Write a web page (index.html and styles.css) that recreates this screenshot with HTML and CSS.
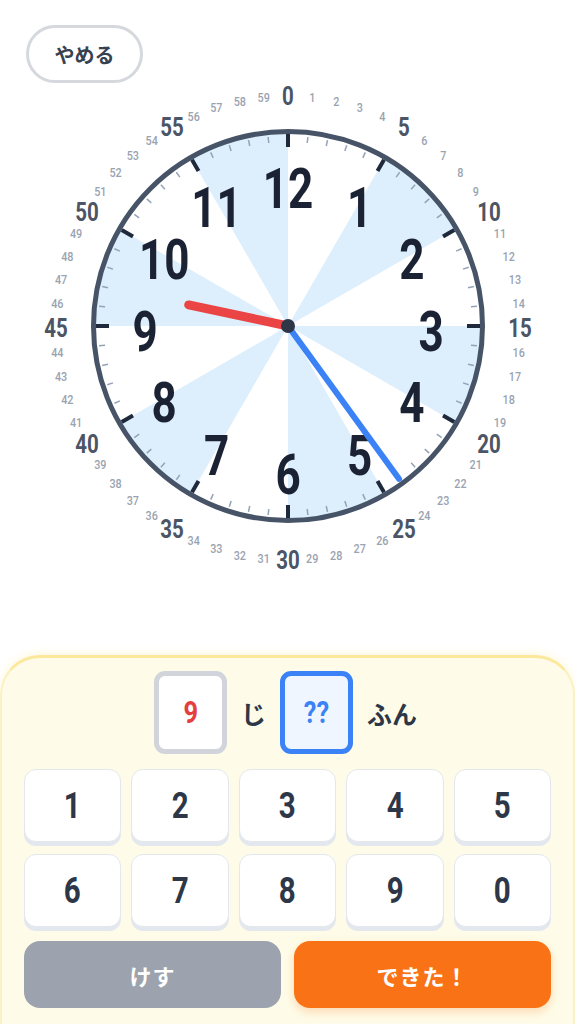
FILE: index.html
```html
<!DOCTYPE html>
<html lang="ja">
<head>
<meta charset="utf-8">
<title>とけい</title>
<link rel="stylesheet" href="styles.css">
</head>
<body>
<div class="app">
  <header class="top">
    <button class="quit">やめる</button>
  </header>
  <div class="clock-wrap">
    <svg id="clock" class="clock" width="500" height="490" viewBox="-250 -240 500 490">
      <circle r="194" class="face"/>
      <g id="sectors" class="sectors"></g>
      <circle r="194.5" class="rim"/>
      <g id="ticks"></g>
      <g id="hours" class="hours"></g>
      <g id="minutes" class="minutes"></g>
      <line class="hand-hour" x1="0" y1="0" x2="0" y2="-101.5" transform="rotate(282)"/>
      <line class="hand-min" x1="0" y1="0" x2="0" y2="-189" transform="rotate(144)"/>
      <circle r="7" class="pivot"/>
    </svg>
  </div>
  <section class="panel">
    <div class="answer">
      <div class="slot slot-hour"><span class="num">9</span></div>
      <span class="unit">じ</span>
      <div class="slot slot-min"><span class="num">??</span></div>
      <span class="unit">ふん</span>
    </div>
    <div class="keypad">
      <button class="key"><span class="num">1</span></button>
      <button class="key"><span class="num">2</span></button>
      <button class="key"><span class="num">3</span></button>
      <button class="key"><span class="num">4</span></button>
      <button class="key"><span class="num">5</span></button>
      <button class="key"><span class="num">6</span></button>
      <button class="key"><span class="num">7</span></button>
      <button class="key"><span class="num">8</span></button>
      <button class="key"><span class="num">9</span></button>
      <button class="key"><span class="num">0</span></button>
    </div>
    <div class="actions">
      <button class="act act-clear">けす</button>
      <button class="act act-done">できた！</button>
    </div>
  </section>
</div>
<script src="script.js"></script>
</body>
</html>
```
FILE: styles.css
```css
* { box-sizing: border-box; }
html, body { margin: 0; padding: 0; background: #ffffff; }
body {
  width: 575px;
  height: 1024px;
  overflow: hidden;
  font-family: "Noto Sans CJK JP", "Noto Sans", sans-serif;
}
.app { display: flex; flex-direction: column; height: 1024px; }

.top { display: flex; padding: 25px 0 0 26px; }
.quit {
  width: 117px;
  height: 58px;
  border: 3px solid #d5d8dd;
  border-radius: 29px;
  background: #ffffff;
  color: #374151;
  font-family: "Noto Sans CJK JP", sans-serif;
  font-weight: 700;
  font-size: 20px;
  padding: 0;
}

.clock-wrap { display: flex; justify-content: center; padding-top: 3px; }
.clock { overflow: visible; display: block; }
.face { fill: #ffffff; }
.sectors path { fill: #ddeffc; }
.rim { fill: none; stroke: #475467; stroke-width: 5; }
.tick-major { stroke: #1e293b; stroke-width: 4; }
.tick-minor { stroke: #94a3b8; stroke-width: 1.5; }
.clock text {
  font-family: "Roboto", "DejaVu Sans", sans-serif;
  text-anchor: middle;
  dominant-baseline: central;
}
.hours text { font-size: 55px; font-weight: 700; fill: #1a2233; }
.minutes .big { font-size: 25px; font-weight: 700; fill: #4b5565; }
.minutes .small { font-size: 12px; font-weight: 500; fill: #9aa3b0; }
.hand-hour { stroke: #ea4444; stroke-width: 9; stroke-linecap: round; }
.hand-min { stroke: #3b82f6; stroke-width: 6; stroke-linecap: round; }
.pivot { fill: #2d3748; }

.panel {
  margin-top: 79px;
  flex: 1;
  background: #fefce8;
  border-top: 3px solid #fce89a;
  border-left: 2px solid #fbf1c2;
  border-right: 2px solid #fbf1c2;
  border-radius: 40px 40px 0 0;
  padding: 13px 22px 0;
  box-shadow: 0 -2px 8px rgba(250, 214, 80, 0.18);
}
.num {
  display: inline-block;
  font-family: "Roboto", sans-serif;
  font-weight: 700;
  transform: scaleX(0.82);
}
.answer {
  display: flex;
  justify-content: center;
  align-items: center;
  gap: 14px;
  padding-right: 4px;
}
.slot {
  width: 73px;
  height: 83px;
  border-radius: 11px;
  border: 5px solid #d1d5db;
  background: #ffffff;
  display: flex;
  align-items: center;
  justify-content: center;
  font-size: 31px;
}
.slot-hour { color: #e53e3e; }
.slot-min { border-color: #3b82f6; background: #eff6ff; color: #3b82f6; }
.unit { font-size: 25px; font-weight: 700; color: #2d3748; }

.keypad {
  margin-top: 15px;
  display: grid;
  grid-template-columns: repeat(5, 1fr);
  gap: 12px 10px;
}
.key {
  height: 73px;
  background: #ffffff;
  border: 1.5px solid #e4e7ec;
  border-radius: 12px;
  box-shadow: 0 4px 0 #e3e8ef;
  color: #2d3748;
  font-size: 36px;
  padding: 0;
  display: flex;
  align-items: center;
  justify-content: center;
}

.actions {
  margin-top: 14px;
  display: grid;
  grid-template-columns: 1fr 1fr;
  gap: 13px;
}
.act {
  height: 67px;
  border: none;
  border-radius: 16px;
  color: #ffffff;
  font-family: "Noto Sans CJK JP", sans-serif;
  font-weight: 700;
  font-size: 22px;
  padding: 0;
  letter-spacing: 1px;
}
.act-clear { background: #9ca3ae; }
.act-done { background: #f97316; box-shadow: 0 4px 10px rgba(249, 115, 22, 0.25); }
```
FILE: script.js
```js
(function () {
  var NS = 'http://www.w3.org/2000/svg';
  function el(tag, attrs, parent, text) {
    var e = document.createElementNS(NS, tag);
    for (var k in attrs) e.setAttribute(k, attrs[k]);
    if (text !== undefined) e.textContent = text;
    parent.appendChild(e);
    return e;
  }
  function pt(r, deg) {
    var a = deg * Math.PI / 180;
    return [r * Math.sin(a), -r * Math.cos(a)];
  }
  var R = 194;
  var sectors = document.getElementById('sectors');
  [1, 3, 5, 7, 9, 11].forEach(function (i) {
    var p0 = pt(R, i * 30), p1 = pt(R, i * 30 + 30);
    el('path', { d: 'M0 0 L' + p0[0].toFixed(2) + ' ' + p0[1].toFixed(2) +
      ' A' + R + ' ' + R + ' 0 0 1 ' + p1[0].toFixed(2) + ' ' + p1[1].toFixed(2) + ' Z' }, sectors);
  });
  var ticks = document.getElementById('ticks');
  for (var m = 0; m < 60; m++) {
    var major = m % 5 === 0;
    el('line', {
      x1: 0, y1: major ? -192 : -190, x2: 0, y2: major ? -179 : -184,
      transform: 'rotate(' + (m * 6) + ')',
      'class': major ? 'tick-major' : 'tick-minor'
    }, ticks);
  }
  var hours = document.getElementById('hours');
  for (var h = 1; h <= 12; h++) {
    var p = pt(143, h * 30);
    el('text', { transform: 'translate(' + p[0].toFixed(2) + ' ' + (p[1] + 6).toFixed(2) + ') scale(0.8 1)' }, hours, String(h));
  }
  var minutes = document.getElementById('minutes');
  for (var n = 0; n < 60; n++) {
    var big = n % 5 === 0;
    var q = pt(232, n * 6);
    el('text', {
      transform: 'translate(' + q[0].toFixed(2) + ' ' + (q[1] + 2.5).toFixed(2) + ') scale(' + (big ? 0.82 : 0.9) + ' 1)',
      'class': big ? 'big' : 'small'
    }, minutes, String(n));
  }
})();
```
